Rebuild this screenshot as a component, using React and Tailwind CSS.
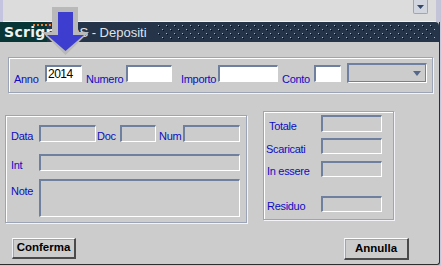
import React from "react";

const lab = "text-[11px] leading-[12px] text-[#0c0cc4] tracking-[-0.3px] whitespace-nowrap";
const inWhite =
  "box-border bg-white border-t-2 border-l-2 border-r border-b border-t-[#6f7f9e] border-l-[#6f7f9e] border-r-white border-b-white";
const inGray =
  "box-border bg-[#cccccc] border-t-2 border-l-2 border-r border-b border-t-[#6f7f9e] border-l-[#6f7f9e] border-r-white border-b-white";
const group =
  "box-border border border-[#9ca4b8] shadow-[inset_1px_1px_0_#ffffff,1px_1px_0_#f4f4f8]";
const btn =
  "box-border flex items-center justify-center bg-[#cccccc] border-t border-l border-t-white border-l-[#eef0f6] border-r-2 border-b-2 border-r-[#4a4a4a] border-b-[#4a4a4a] shadow-[inset_1px_1px_0_#9aa4bc] text-[11.5px] font-bold text-black";

function Dots() {
  return (
    <svg width="100%" height="16" className="block">
      <defs>
        <pattern id="dp" width="8" height="8" patternUnits="userSpaceOnUse">
          <rect x="1" y="1" width="1" height="1" fill="#a9b2c4" />
          <rect x="2" y="2" width="1" height="1" fill="#0b1018" />
          <rect x="5" y="5" width="1" height="1" fill="#a9b2c4" />
          <rect x="6" y="6" width="1" height="1" fill="#0b1018" />
        </pattern>
      </defs>
      <rect width="100%" height="16" fill="url(#dp)" />
    </svg>
  );
}

export default function App() {
  return (
    <div className="relative w-[441px] h-[266px] overflow-hidden bg-[#c8c8dc] font-[Liberation_Sans,Arial,sans-serif]">
      {/* top strip */}
      <div className="flex h-[22px]">
        <div className="w-[3px] bg-[#c4c4e0]" />
        <div className="flex-1 bg-[#dcdcdc] border-b border-b-[#f2f2f2] flex justify-end pr-[8px]">
          <div className="w-[15px] h-[14px] box-border bg-[#d2d6de] border border-[#9aa6ba] border-t-0 rounded-b-[2px] flex items-center justify-center">
            <svg width="7" height="4" viewBox="0 0 7 4">
              <polygon points="0,0 7,0 3.5,4" fill="#34466a" />
            </svg>
          </div>
        </div>
        <div className="w-[5px] bg-[#c4c4d8]" />
      </div>

      {/* window */}
      <div className="w-[440px] h-[243px] flex flex-col bg-[#cccccc] border-r border-b border-[#2e2e2e] rounded-br-[3px] box-border">
        {/* title bar */}
        <div className="h-[20px] flex items-center bg-[#263449] rounded-tr-[4px]">
          <div className="h-full w-[47px] bg-[#083636] flex items-center pl-[4px] relative">
            <span className="font-[DejaVu_Sans,sans-serif] font-bold text-[14px] text-[#eef2ee] tracking-[0.3px] leading-none">
              Scrigno
            </span>
          </div>
          <span className="ml-[23px] text-[13px] text-[#dfe3ea] leading-none whitespace-nowrap">
            DS - Depositi
          </span>
          <div className="flex-1 ml-[10px] mr-[4px]">
            <Dots />
          </div>
        </div>

        {/* top group */}
        <div className={`${group} mt-[15px] ml-[8px] w-[425px] h-[36px] flex items-start pl-[5px]`}>
          <div className={`${lab} w-[31px] mt-[15px]`}>Anno</div>
          <div className={`${inWhite} w-[37px] h-[17px] mt-[7px] text-[12px] leading-[14px] tracking-[-0.5px] text-black pl-[1px]`}>
            2014
          </div>
          <div className={`${lab} ml-[4px] w-[40px] mt-[15px]`}>Numero</div>
          <div className={`${inWhite} w-[46px] h-[17px] mt-[7px]`} />
          <div className={`${lab} ml-[9px] w-[37px] mt-[15px]`}>Importo</div>
          <div className={`${inWhite} w-[60px] h-[17px] mt-[7px]`} />
          <div className={`${lab} ml-[4px] w-[32px] mt-[15px]`}>Conto</div>
          <div className={`${inWhite} w-[27px] h-[17px] mt-[7px]`} />
          <div className="ml-[6px] mt-[5px] w-[80px] h-[20px] box-border bg-[#cccccc] border-t-2 border-l-2 border-t-[#7080a2] border-l-[#7080a2] border-r border-b border-r-white border-b-white shadow-[inset_-1px_-1px_0_#7080a2] flex items-center justify-end pr-[5px]">
            <svg width="8" height="5" viewBox="0 0 8 5">
              <polygon points="0,0 8,0 4,5" fill="#55688c" />
            </svg>
          </div>
        </div>

        {/* middle */}
        <div className="flex items-start">
          {/* left group */}
          <div className={`${group} ml-[5px] mt-[22px] w-[242px] h-[108px] flex flex-col pl-[5px]`}>
            <div className="flex items-end mt-[9px] h-[17px]">
              <div className={`${lab} w-[28px]`}>Data</div>
              <div className={`${inGray} w-[57px] h-[17px]`} />
              <div className={`${lab} ml-[1px] w-[23px]`}>Doc</div>
              <div className={`${inGray} w-[36px] h-[17px]`} />
              <div className={`${lab} ml-[3px] w-[24px]`}>Num</div>
              <div className={`${inGray} w-[57px] h-[17px]`} />
            </div>
            <div className="flex items-end mt-[12px] h-[17px]">
              <div className={`${lab} w-[28px]`}>Int</div>
              <div className={`${inGray} w-[201px] h-[17px]`} />
            </div>
            <div className="flex items-start mt-[8px]">
              <div className={`${lab} w-[28px] mt-[6px]`}>Note</div>
              <div className={`${inGray} w-[201px] h-[38px]`} />
            </div>
          </div>

          {/* right group */}
          <div className={`${group} ml-[16px] mt-[18px] w-[131px] h-[109px] flex flex-col`}>
            <div className="flex items-end mt-[3px] h-[17px]">
              <div className={`${lab} w-[57px] pl-[5px]`}>Totale</div>
              <div className={`${inGray} w-[61px] h-[17px]`} />
            </div>
            <div className="flex items-end mt-[6px] h-[16px]">
              <div className={`${lab} w-[57px] pl-[2px] mb-[-1px]`}>Scaricati</div>
              <div className={`${inGray} w-[61px] h-[16px]`} />
            </div>
            <div className="flex items-end mt-[7px] h-[16px]">
              <div className={`${lab} w-[57px] pl-[3px]`}>In essere</div>
              <div className={`${inGray} w-[61px] h-[16px]`} />
            </div>
            <div className="flex items-end mt-[19px] h-[16px]">
              <div className={`${lab} w-[57px] pl-[3px]`}>Residuo</div>
              <div className={`${inGray} w-[61px] h-[16px]`} />
            </div>
          </div>
        </div>

        {/* buttons */}
        <div className="flex justify-between mt-[15px] pl-[12px] pr-[30px]">
          <div className={`${btn} w-[64px] h-[21px]`}>Conferma</div>
          <div className={`${btn} w-[65px] h-[22px]`}>Annulla</div>
        </div>
      </div>

      {/* overlay arrow */}
      <svg className="absolute left-0 top-0" width="100" height="60" viewBox="0 0 100 60">
        <polygon points="52,7 78,7 78,32 89,32 65.5,55 42,32 52,32" fill="#b9b9b9" />
        <polygon points="58,12 73,12 73,35 84,35 65.5,51 47,35 58,35" fill="#3d3dcf" />
      </svg>
      {/* orange dots on logo */}
      <div className="absolute left-[33px] top-[24px] flex gap-[2px]">
        <div className="w-[2px] h-[2px] bg-[#f0802c]" />
        <div className="w-[2px] h-[2px] bg-[#f0802c]" />
        <div className="w-[2px] h-[2px] bg-[#f0802c]" />
        <div className="w-[2px] h-[2px] bg-[#f0802c]" />
        <div className="w-[2px] h-[2px] bg-[#f0802c]" />
      </div>
    </div>
  );
}
